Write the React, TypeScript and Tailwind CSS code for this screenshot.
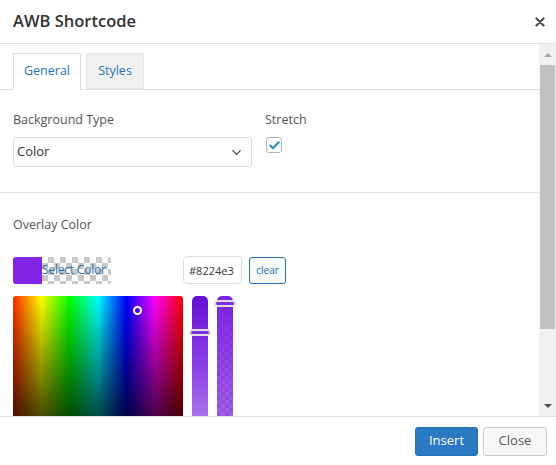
import { ChevronDown, Check } from "lucide-react";

const checker =
  "bg-[image:conic-gradient(#c8c8c8_25%,#ffffff_0_50%,#c8c8c8_0_75%,#ffffff_0)] bg-[length:12px_12px]";

function ColorPicker() {
  return (
    <div className="flex flex-col gap-[12px]">
      <div className="flex items-center">
        <button
          type="button"
          className="flex h-[27px] w-[98px] rounded-[3px]"
        >
          <span className="h-full w-[29px] shrink-0 rounded-l-[3px] bg-[#8224e3]" />
          <span
            className={`flex h-full w-[69px] items-center whitespace-nowrap rounded-r-[3px] text-[12px] leading-none tracking-[-0.2px] text-[#2c6ea5] ${checker}`}
          >
            Select Color
          </span>
        </button>
        <input
          readOnly
          value="#8224e3"
          className="ml-[72px] h-[28px] w-[59px] rounded-[4px] border border-[#ddd] px-[5px] text-[11px] text-[#333] outline-none"
        />
        <button
          type="button"
          className="ml-[7px] h-[27px] w-[37px] rounded-[3px] border border-[#2271b1] bg-[#f6f7f7] text-[10px] text-[#2271b1]"
        >
          clear
        </button>
      </div>

      <div className="flex gap-[9px]">
        {/* saturation / hue square */}
        <div className="relative h-[170px] w-[170px] shrink-0 rounded-t-[3px] bg-[image:linear-gradient(to_bottom,transparent,#000),linear-gradient(to_right,#ff2a00,#ff0,#0f0,#0ff,#00f,#f0f,#f00)]">
          <span className="absolute left-[120px] top-[10px] h-[9px] w-[9px] rounded-full border-2 border-white" />
        </div>

        {/* lightness */}
        <div className="relative h-[170px] w-[16px] rounded-t-[5px] bg-[image:linear-gradient(to_bottom,#6610d6,#8a3ee6_40%,#c7a2ee)]">
          <span className="absolute left-[-3px] top-[33px] h-[7px] w-[22px] rounded-full border-2 border-[#ddd] bg-[#7b2fe0]" />
        </div>

        {/* alpha */}
        <div className="relative h-[170px] w-[16px] rounded-t-[5px] bg-[length:100%_100%,8px_8px] bg-[image:linear-gradient(to_bottom,#7a22e0,rgba(130,36,227,0.6)),conic-gradient(#ccc_25%,#fff_0_50%,#ccc_0_75%,#fff_0)]">
          <span className="absolute left-[-3px] top-[4px] h-[7px] w-[22px] rounded-full border-2 border-[#ddd] bg-[#7b2fe0]" />
        </div>
      </div>
    </div>
  );
}

export default function App() {
  return (
    <div className="flex h-[465px] w-[556px] flex-col overflow-hidden bg-white font-['Open_Sans',sans-serif] text-[#444]">
      {/* header */}
      <div className="flex h-[44px] shrink-0 items-center justify-between border-b border-[#ddd] pl-[13px] pr-[11px]">
        <h1 className="text-[16.5px] font-semibold text-[#333]">AWB Shortcode</h1>
        <svg width="10" height="10" viewBox="0 0 10 10" className="text-[#555]">
          <path d="M1.5 1.5 L8.5 8.5 M8.5 1.5 L1.5 8.5" stroke="currentColor" strokeWidth="2.4" strokeLinecap="round" />
        </svg>
      </div>

      {/* body */}
      <div className="flex min-h-0 flex-1">
        <div className="min-w-0 flex-1 overflow-hidden">
          <div className="flex gap-[5px] border-b border-[#ddd] px-[13px] pt-[9px]">
            <div className="mb-[-1px] flex h-[37px] w-[68px] items-center justify-center border border-b-white border-[#ddd] bg-white text-[12.5px] text-[#2a72b5]">
              General
            </div>
            <div className="flex h-[36px] w-[58px] items-center justify-center border border-[#e6e6e6] bg-[#f1f1f1] text-[12.5px] text-[#2a72b5]">
              Styles
            </div>
          </div>

          <div className="flex gap-[13px] border-b border-[#e4e4e4] px-[13px] pb-[25px] pt-[21px]">
            <div className="flex w-[239px] flex-col gap-[8px]">
              <span className="text-[12.5px] leading-[18px] text-[#555]">Background Type</span>
              <div className="flex h-[30px] items-center justify-between rounded-[3px] border border-[#ddd] pl-[3px] pr-[7px] text-[13px] text-[#333]">
                Color
                <ChevronDown size={15} strokeWidth={2} className="text-[#444]" />
              </div>
            </div>
            <div className="flex flex-col gap-[8px]">
              <span className="text-[12.5px] leading-[18px] text-[#555]">Stretch</span>
              <span className="ml-[1px] flex h-[16px] w-[16px] items-center justify-center rounded-[3px] border border-[#b4b9be] bg-white">
                <Check size={13} strokeWidth={3.5} className="text-[#1e8cbe]" />
              </span>
            </div>
          </div>

          <div className="flex flex-col gap-[22px] px-[13px] pt-[23px]">
            <span className="text-[12.5px] leading-[18px] text-[#555]">Overlay Color</span>
            <ColorPicker />
          </div>
        </div>

        {/* scrollbar */}
        <div className="flex w-[17px] shrink-0 flex-col items-center bg-[#f1f1f1]">
          <div className="flex h-[21px] items-center justify-center">
            <span className="h-0 w-0 border-x-[4px] border-b-[4px] border-x-transparent border-b-[#a3a3a3]" />
          </div>
          <div className="h-[264px] w-[15px] bg-[#c1c1c1]" />
          <div className="flex flex-1 items-end justify-center pb-[8px]">
            <span className="h-0 w-0 border-x-[4px] border-t-[4px] border-x-transparent border-t-[#505050]" />
          </div>
        </div>
      </div>

      {/* footer */}
      <div className="flex h-[49px] shrink-0 items-center justify-end gap-[5px] border-t border-[#ddd] pr-[9px]">
        <button
          type="button"
          className="h-[29px] w-[63px] rounded-[3px] border border-[#2271b1] bg-[#2b79c2] text-[13px] text-white"
        >
          Insert
        </button>
        <button
          type="button"
          className="h-[29px] w-[64px] rounded-[3px] border border-[#ccc] bg-[#f7f7f7] text-[13px] text-[#555]"
        >
          Close
        </button>
      </div>
    </div>
  );
}
